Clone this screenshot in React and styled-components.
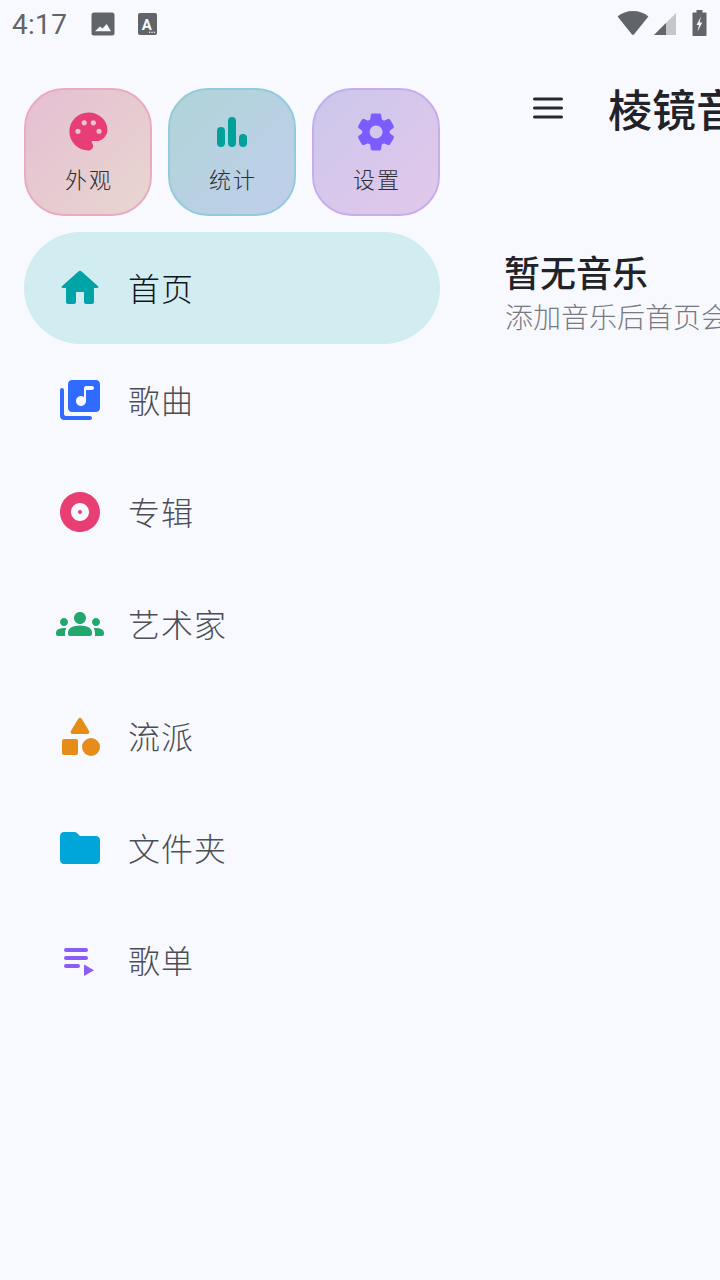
import React from "react";
import styled, { createGlobalStyle } from "styled-components";

const Global = createGlobalStyle`
  html, body {
    margin: 0;
    padding: 0;
    background: #f8f9ff;
  }
  * {
    box-sizing: border-box;
  }
`;

const Dot = styled.circle`
  fill: #e8c6d1;
`;

const tiles = [
  {
    label: "外观",
    from: "#e5bfd3",
    to: "#e8d6cf",
    edge: "#e8abc0",
    color: "#e83e78",
    icon: (
      <g transform="translate(0.8 0.4) scale(0.95)">
        <path d="M12 2C6.49 2 2 6.49 2 12s4.49 10 10 10c1.38 0 2.5-1.12 2.5-2.5 0-.61-.23-1.2-.64-1.67-.08-.1-.13-.21-.13-.33 0-.28.22-.5.5-.5H16c3.31 0 6-2.69 6-6 0-4.96-4.49-9-10-9z" />
        <Dot cx="6.5" cy="11.8" r="1.35" />
        <Dot cx="9.8" cy="7.4" r="1.35" />
        <Dot cx="14.6" cy="7.4" r="1.35" />
        <Dot cx="17.6" cy="11.8" r="1.35" />
      </g>
    ),
  },
  {
    label: "统计",
    from: "#b0d4d9",
    to: "#c0cfeb",
    edge: "#95cbd8",
    color: "#00a19b",
    icon: (
      <>
        <rect x="4.5" y="9.5" width="4" height="10" rx="2" />
        <rect x="10" y="4.5" width="4" height="15" rx="2" />
        <rect x="15.5" y="13" width="4" height="6.5" rx="2" />
      </>
    ),
  },
  {
    label: "设置",
    from: "#cbc7ec",
    to: "#e2c8ea",
    edge: "#c5aeea",
    color: "#7c5cff",
    icon: (
      <path
        transform="translate(0.96 0.96) scale(0.92)"
        d="M19.5 12c0-.23-.01-.45-.03-.68l1.86-1.41c.4-.3.51-.86.26-1.3l-1.87-3.23c-.25-.44-.79-.62-1.25-.42l-2.15.91c-.37-.26-.76-.49-1.17-.68l-.29-2.31c-.06-.5-.49-.88-.99-.88h-3.73c-.51 0-.94.38-1 .88l-.29 2.31c-.41.19-.8.42-1.17.68l-2.15-.91c-.46-.2-1-.02-1.25.42L2.41 8.62c-.25.44-.14.99.26 1.3l1.86 1.41c-.02.22-.03.44-.03.67s.01.45.03.68l-1.86 1.41c-.4.3-.51.86-.26 1.3l1.87 3.23c.25.44.79.62 1.25.42l2.15-.91c.37.26.76.49 1.17.68l.29 2.31c.06.5.49.88.99.88h3.73c.5 0 .93-.38.99-.88l.29-2.31c.41-.19.8-.42 1.17-.68l2.15.91c.46.2 1 .02 1.25-.42l1.87-3.23c.25-.44.14-.99-.26-1.3l-1.86-1.41c.03-.23.04-.45.04-.68zm-7.46 3.5c-1.93 0-3.5-1.57-3.5-3.5s1.57-3.5 3.5-3.5 3.5 1.57 3.5 3.5-1.57 3.5-3.5 3.5z"
      />
    ),
  },
];

const navItems = [
  {
    label: "首页",
    color: "#00a3a6",
    active: true,
    icon: (
      <path d="M10 19v-5h4v5c0 .55.45 1 1 1h3c.55 0 1-.45 1-1v-7h1.7c.46 0 .68-.57.33-.87L12.67 3.6c-.38-.34-.96-.34-1.34 0l-8.36 7.53c-.34.3-.13.87.33.87H5v7c0 .55.45 1 1 1h3c.55 0 1-.45 1-1z" />
    ),
  },
  {
    label: "歌曲",
    color: "#2f6bff",
    icon: (
      <path d="M20 2H8c-1.1 0-2 .9-2 2v12c0 1.1.9 2 2 2h12c1.1 0 2-.9 2-2V4c0-1.1-.9-2-2-2zm-2 5h-3v5.5c0 1.38-1.12 2.5-2.5 2.5S10 13.88 10 12.5s1.12-2.5 2.5-2.5c.57 0 1.08.19 1.5.51V6c0-.55.45-1 1-1h3c.55 0 1 .45 1 1s-.45 1-1 1zM3 6c-.55 0-1 .45-1 1v13c0 1.1.9 2 2 2h13c.55 0 1-.45 1-1s-.45-1-1-1H5c-.55 0-1-.45-1-1V7c0-.55-.45-1-1-1z" />
    ),
  },
  {
    label: "专辑",
    color: "#e83e74",
    icon: (
      <path d="M12 2C6.48 2 2 6.48 2 12s4.48 10 10 10 10-4.48 10-10S17.52 2 12 2zm0 14.5c-2.49 0-4.5-2.01-4.5-4.5S9.51 7.5 12 7.5s4.5 2.01 4.5 4.5-2.01 4.5-4.5 4.5zm0-5.5c-.55 0-1 .45-1 1s.45 1 1 1 1-.45 1-1-.45-1-1-1z" />
    ),
  },
  {
    label: "艺术家",
    color: "#22a86e",
    icon: (
      <path d="M12 12.75c1.63 0 3.07.39 4.24.9 1.08.48 1.76 1.56 1.76 2.73V17c0 .55-.45 1-1 1H7c-.55 0-1-.45-1-1v-.61c0-1.18.68-2.26 1.76-2.73 1.17-.52 2.61-.91 4.24-.91zM4 13c1.1 0 2-.9 2-2s-.9-2-2-2-2 .9-2 2 .9 2 2 2zm1.13 1.1c-.37-.06-.74-.1-1.13-.1-.99 0-1.93.21-2.78.58C.48 14.9 0 15.62 0 16.43V17c0 .55.45 1 1 1h3.5v-1.61c0-.83.23-1.61.63-2.29zM20 13c1.1 0 2-.9 2-2s-.9-2-2-2-2 .9-2 2 .9 2 2 2zm4 3.43c0-.81-.48-1.53-1.22-1.85-.85-.37-1.79-.58-2.78-.58-.39 0-.76.04-1.13.1.4.68.63 1.46.63 2.29V18H23c.55 0 1-.45 1-1v-.57zM12 6c1.66 0 3 1.34 3 3s-1.34 3-3 3-3-1.34-3-3 1.34-3 3-3z" />
    ),
  },
  {
    label: "流派",
    color: "#e68c19",
    icon: (
      <>
        <path d="M11.15 3.4L7.43 9.48c-.41.66.07 1.52.85 1.52h7.43c.78 0 1.26-.86.85-1.52L12.85 3.4c-.39-.64-1.31-.64-1.7 0z" />
        <circle cx="17.5" cy="17.5" r="4.5" />
        <path d="M4 21.5h6c.55 0 1-.45 1-1v-6c0-.55-.45-1-1-1H4c-.55 0-1 .45-1 1v6c0 .55.45 1 1 1z" />
      </>
    ),
  },
  {
    label: "文件夹",
    color: "#00a5d9",
    icon: (
      <path d="M10.59 4.59C10.21 4.21 9.7 4 9.17 4H4c-1.1 0-1.99.9-1.99 2L2 18c0 1.1.9 2 2 2h16c1.1 0 2-.9 2-2V8c0-1.1-.9-2-2-2h-8l-1.41-1.41z" />
    ),
  },
  {
    label: "歌单",
    color: "#8b5cf6",
    icon: (
      <>
        <rect x="4" y="6" width="12" height="2" rx="1" />
        <rect x="4" y="10" width="12" height="2" rx="1" />
        <rect x="4" y="14" width="8" height="2" rx="1" />
        <path d="M14 14.2v5.8l5-2.9z" />
      </>
    ),
  },
];

export default function App() {
  return (
    <>
      <Global />
      <Page>
        <StatusBar>
          <StatusLeft>
            <Clock>4:17</Clock>
            <StatusIcon width="24" height="24" viewBox="0 0 24 24">
              <rect x="0.5" y="0.5" width="23" height="23" rx="2.5" />
              <path d="M4 19.2l5-4.7 2.5 2 4.2-4.5 4.3 7.2z" fill="#f8f9ff" />
            </StatusIcon>
            <StatusIcon width="24" height="24" viewBox="0 0 24 24">
              <rect x="3" y="1" width="19" height="22" rx="2" />
              <AppLetter x="11.7" y="17.5" textAnchor="middle">A</AppLetter>
              <circle cx="14.6" cy="20.2" r=".8" fill="#f8f9ff" />
              <circle cx="17" cy="20.2" r=".8" fill="#f8f9ff" />
              <circle cx="19.4" cy="20.2" r=".8" fill="#f8f9ff" />
            </StatusIcon>
          </StatusLeft>
          <StatusRight>
            <WifiIcon width="32" height="26" viewBox="0 0 32 26" fill="#616468">
              <path d="M16 1C10 1 5 3 .6 6.4L15 24.6c.5.6 1.4.6 1.9 0L31.4 6.4C27 3 22 1 16 1z" />
            </WifiIcon>
            <svg width="22" height="22" viewBox="0 0 22 22">
              <path d="M0 22L22 0v22z" fill="#c4c6ca" />
              <path d="M0 22L12 10v12z" fill="#616468" />
            </svg>
            <BatteryIcon width="15" height="26" viewBox="0 0 15 26" fill="#616468">
              <path
                fillRule="evenodd"
                d="M4.5 0h6v2.5h3c.6 0 1 .4 1 1V25c0 .6-.4 1-1 1h-12c-.6 0-1-.4-1-1V3.5c0-.6.4-1 1-1h3zM9 6.5L4.5 15H7l-1.5 6.5 4.8-9H7.5z"
              />
            </BatteryIcon>
          </StatusRight>
        </StatusBar>
        <Body>
          <Drawer>
            <TileRow>
              {tiles.map((tile) => (
                <Tile key={tile.label} $from={tile.from} $to={tile.to} $edge={tile.edge}>
                  <Glyph $color={tile.color} viewBox="0 0 24 24">
                    {tile.icon}
                  </Glyph>
                  <TileLabel>{tile.label}</TileLabel>
                </Tile>
              ))}
            </TileRow>
            <NavList>
              {navItems.map((item) => (
                <NavItem key={item.label} $active={item.active}>
                  <Glyph $color={item.color} viewBox="0 0 24 24">
                    {item.icon}
                  </Glyph>
                  <NavLabel $active={item.active}>{item.label}</NavLabel>
                </NavItem>
              ))}
            </NavList>
          </Drawer>
          <Main>
            <Header>
              <MenuIcon viewBox="0 0 24 24">
                <rect x="4.5" y="6.75" width="15" height="1.5" rx=".75" />
                <rect x="4.5" y="11.25" width="15" height="1.5" rx=".75" />
                <rect x="4.5" y="15.75" width="15" height="1.5" rx=".75" />
              </MenuIcon>
              <Title>棱镜音乐</Title>
            </Header>
            <Empty>
              <EmptyTitle>暂无音乐</EmptyTitle>
              <EmptyText>添加音乐后首页会显示推荐内容</EmptyText>
            </Empty>
          </Main>
        </Body>
      </Page>
    </>
  );
}

const Page = styled.div`
  width: 720px;
  height: 1280px;
  overflow: hidden;
  background: #f8f9ff;
  display: flex;
  flex-direction: column;
  font-family: "Noto Sans CJK SC", "Noto Sans", sans-serif;
`;

const StatusBar = styled.div`
  height: 48px;
  flex: none;
  display: flex;
  justify-content: space-between;
  align-items: center;
  padding: 0 13px 0 12px;
`;

const StatusLeft = styled.div`
  display: flex;
  align-items: center;
  gap: 20px;
`;

const StatusRight = styled.div`
  display: flex;
  align-items: center;
  gap: 5px;
`;

const WifiIcon = styled.svg`
  margin-top: -2px;
`;

const BatteryIcon = styled.svg`
  margin-left: 11px;
  margin-top: -2px;
`;

const Clock = styled.span`
  font-family: Roboto, sans-serif;
  font-size: 28px;
  letter-spacing: 0.3px;
  color: #616468;
  width: 59px;
`;

const StatusIcon = styled.svg`
  display: block;
  fill: #616468;
`;

const AppLetter = styled.text`
  font-family: Roboto, sans-serif;
  font-size: 15px;
  font-weight: 700;
  fill: #f8f9ff;
`;

const Body = styled.div`
  flex: 1;
  display: flex;
  min-height: 0;
`;

const Drawer = styled.nav`
  width: 464px;
  flex: none;
  padding: 40px 24px 0;
  display: flex;
  flex-direction: column;
  gap: 16px;
`;

const TileRow = styled.div`
  display: flex;
  gap: 16px;
`;

const Tile = styled.button`
  width: 128px;
  height: 128px;
  padding: 18px 0 0;
  margin: 0;
  border-radius: 40px;
  border: 2px solid ${(p) => p.$edge};
  background: linear-gradient(135deg, ${(p) => p.$from}, ${(p) => p.$to});
  display: flex;
  flex-direction: column;
  align-items: center;
  font-family: inherit;
`;

const Glyph = styled.svg`
  width: 48px;
  height: 48px;
  flex: none;
  display: block;
  fill: ${(p) => p.$color};
`;

const TileLabel = styled.span`
  margin-top: 6px;
  padding-left: 2px;
  font-size: 22px;
  letter-spacing: 2px;
  line-height: 32px;
  font-weight: 300;
  color: #2c2d32;
`;

const NavList = styled.div`
  display: flex;
  flex-direction: column;
`;

const NavItem = styled.div`
  height: 112px;
  border-radius: 56px;
  padding-left: 32px;
  display: flex;
  align-items: center;
  gap: 24px;
  background: ${(p) => (p.$active ? "#d2edf1" : "transparent")};
`;

const NavLabel = styled.span`
  font-size: 32px;
  letter-spacing: 1px;
  line-height: 44px;
  font-weight: 300;
  padding-bottom: 2px;
  color: ${(p) => (p.$active ? "#14151a" : "#4c4e56")};
`;

const Main = styled.main`
  flex: 1;
  min-width: 0;
  display: flex;
  flex-direction: column;
`;

const Header = styled.header`
  height: 120px;
  flex: none;
  display: flex;
  align-items: center;
  padding-left: 60px;
  gap: 36px;
`;

const MenuIcon = styled.svg`
  width: 48px;
  height: 48px;
  flex: none;
  fill: #26272c;
`;

const Title = styled.h1`
  margin: 0;
  font-size: 44px;
  line-height: 60px;
  font-weight: 500;
  color: #222328;
  white-space: nowrap;
`;

const Empty = styled.div`
  padding: 78px 0 0 41px;
  display: flex;
  flex-direction: column;
`;

const EmptyTitle = styled.h2`
  margin: 0 0 2px -1px;
  font-size: 36px;
  line-height: 50px;
  font-weight: 500;
  color: #222328;
  white-space: nowrap;
`;

const EmptyText = styled.p`
  margin: 0;
  font-size: 28px;
  line-height: 36px;
  font-weight: 300;
  color: #787a82;
  white-space: nowrap;
`;
